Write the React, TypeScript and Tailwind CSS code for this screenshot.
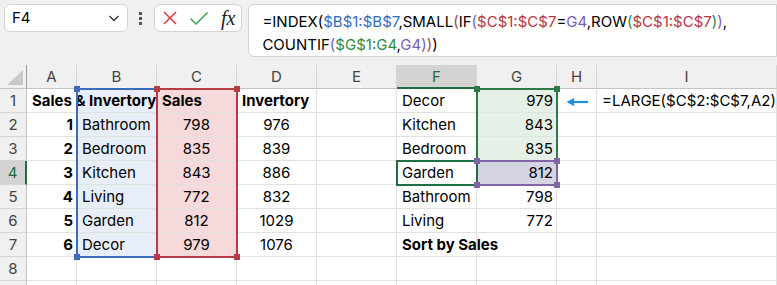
import React from "react";

const FONT = "font-['Inter','Noto_Sans',sans-serif]";

const salesRows: [string, string, string, string][] = [
  ["1", "Bathroom", "798", "976"],
  ["2", "Bedroom", "835", "839"],
  ["3", "Kitchen", "843", "886"],
  ["4", "Living", "772", "832"],
  ["5", "Garden", "812", "1029"],
  ["6", "Decor", "979", "1076"],
];

const sorted: [string, string][] = [
  ["Decor", "979"],
  ["Kitchen", "843"],
  ["Bedroom", "835"],
  ["Garden", "812"],
  ["Bathroom", "798"],
  ["Living", "772"],
];

type Spec = { text?: React.ReactNode; align?: "l" | "r" | "c"; bold?: boolean; over?: boolean };

function fillFor(r: number, c: number): string {
  if (c === 1 && r >= 1 && r <= 7) return "bg-[#e8eef8]";
  if (c === 2 && r >= 1 && r <= 7) return "bg-[#f5d9db]";
  if (c === 6 && r >= 1 && r <= 3) return "bg-[#e5f1e7]";
  if (c === 6 && r === 4) return "bg-[#d4d5e0]";
  return "bg-white";
}

function Arrow() {
  return (
    <svg width="22" height="10" viewBox="0 0 22 10">
      <line x1="3" y1="5" x2="22" y2="5" stroke="#1b8ee8" strokeWidth="2.2" />
      <path d="M0.5 5 L8 1 L8 9 Z" fill="#1b8ee8" />
    </svg>
  );
}

function specFor(r: number, c: number): Spec {
  if (r === 1) {
    if (c === 0) return { text: "Sales & Invertory", align: "l", bold: true, over: true };
    if (c === 2) return { text: "Sales", align: "l", bold: true };
    if (c === 3) return { text: "Invertory", align: "l", bold: true };
    if (c === 5) return { text: sorted[0][0], align: "l" };
    if (c === 6) return { text: sorted[0][1], align: "r" };
    if (c === 7) return { text: <Arrow />, align: "c" };
    if (c === 8) return { text: "=LARGE($C$2:$C$7,A2)", align: "l" };
    return {};
  }
  if (r >= 2 && r <= 7) {
    const d = salesRows[r - 2];
    if (c === 0) return { text: d[0], align: "r", bold: true };
    if (c === 1) return { text: d[1], align: "l" };
    if (c === 2) return { text: d[2], align: "c" };
    if (c === 3) return { text: d[3], align: "c" };
    if (c === 5 && r <= 6) return { text: sorted[r - 1][0], align: "l" };
    if (c === 6 && r <= 6) return { text: sorted[r - 1][1], align: "r" };
    if (c === 5 && r === 7) return { text: "Sort by Sales", align: "l", bold: true, over: true };
  }
  return {};
}

function alignCls(a?: "l" | "r" | "c") {
  if (a === "r") return "justify-end pr-[3px]";
  if (a === "c") return "justify-center";
  return "justify-start pl-[5px]";
}

const COLS = ["A", "B", "C", "D", "E", "F", "G", "H", "I"];

function Handle({ cls, color }: { cls: string; color: string }) {
  return <div className={`absolute w-[6px] h-[6px] ${cls} ${color}`} />;
}

export default function App() {
  const cells: React.ReactNode[] = [];
  cells.push(
    <div key="corner" className="relative bg-[#f0f0f0] border-r border-r-[#9f9f9f] border-b border-b-[#c4c4c4]">
      <svg className="absolute left-[7px] top-[5px]" width="16" height="15" viewBox="0 0 16 15">
        <path d="M16 0 L16 15 L0 15 Z" fill="#c9c9c9" />
      </svg>
    </div>
  );
  COLS.forEach((h, i) => {
    const active = i === 5;
    cells.push(
      <div
        key={"h" + h}
        className={
          active
            ? "flex items-center justify-center pt-[2px] bg-[#d3d3d3] text-[#1e6b3c] text-[15px] border-r border-r-[#d6d6d6] border-b-2 border-b-[#1f6e43]"
            : "flex items-center justify-center pt-[1px] bg-[#f0f0f0] text-[#444] text-[15px] border-r border-r-[#d6d6d6] border-b border-b-[#c4c4c4]"
        }
      >
        {h}
      </div>
    );
  });
  for (let r = 1; r <= 9; r++) {
    const active = r === 4;
    cells.push(
      <div
        key={"r" + r}
        className={
          active
            ? "flex items-center justify-center pt-[2px] bg-[#d3d3d3] text-[#1e6b3c] text-[15px] border-b border-b-[#d6d6d6] border-r-2 border-r-[#1f6e43]"
            : "flex items-center justify-center pt-[2px] bg-[#f0f0f0] text-[#444] text-[15px] border-b border-b-[#d6d6d6] border-r border-r-[#c4c4c4]"
        }
      >
        {r <= 8 ? r : ""}
      </div>
    );
    for (let c = 0; c < 9; c++) {
      const s = specFor(r, c);
      cells.push(
        <div
          key={`c${r}-${c}`}
          className={`flex items-center pt-[2px] whitespace-nowrap text-[15px] text-black border-r border-b border-[#e1e1e1] ${fillFor(r, c)} ${alignCls(s.align)} ${s.bold ? "font-bold" : ""} ${s.over ? "relative z-10 overflow-visible" : "overflow-hidden"}`}
        >
          {s.text}
        </div>
      );
    }
  }

  return (
    <div className={`w-[777px] h-[285px] overflow-hidden bg-[#f0f0f0] ${FONT}`}>
      <div className="flex h-[65px] items-start pt-[4px] pl-[4px]">
        <div className="flex h-[28px] w-[126px] items-center justify-between rounded-md border border-[#d3d3d3] bg-white pl-[7px] pr-[6px] text-[15px] text-black">
          <span>F4</span>
          <svg width="14" height="14" viewBox="0 0 14 14">
            <path d="M2.5 5 L7 9.5 L11.5 5" fill="none" stroke="#333" strokeWidth="1.3" />
          </svg>
        </div>
        <div className="flex h-[28px] w-[27px] flex-col items-center justify-center gap-[2px]">
          <div className="h-[3px] w-[3px] bg-[#555]" />
          <div className="h-[3px] w-[3px] bg-[#555]" />
          <div className="h-[3px] w-[3px] bg-[#555]" />
        </div>
        <div className="flex h-[28px] w-[90px] items-center justify-between rounded-md border border-[#d3d3d3] bg-white pl-[7px] pr-[6px]">
          <svg width="16" height="16" viewBox="0 0 16 16">
            <path d="M2 2 L14 14 M14 2 L2 14" stroke="#e0393e" strokeWidth="1.5" fill="none" />
          </svg>
          <svg width="20" height="16" viewBox="0 0 20 16">
            <path d="M1.5 8.5 L7 14 L18.5 2.5" stroke="#3ea34d" strokeWidth="1.5" fill="none" />
          </svg>
          <span className="font-['Liberation_Serif',serif] italic text-[20px] leading-none text-[#222]">fx</span>
        </div>
        <div className="ml-[6px] h-[53px] w-[540px] rounded-l-md border border-[#d3d3d3] bg-white pl-[13px] pt-[5px] text-[15px] leading-[23px] text-black whitespace-nowrap">
          <div>
            =INDEX(<span className="text-[#2f6cc0]">$B$1:$B$7</span>,SMALL
            <span className="text-[#a8454b]">(</span>IF<span className="text-[#7a5bb0]">(</span>
            <span className="text-[#b8363f]">$C$1:$C$7</span>=<span className="text-[#7a5bb0]">G4</span>,ROW
            <span className="text-[#2f8a3e]">(</span>
            <span className="text-[#b8363f]">$C$1:$C$7</span>
            <span className="text-[#2f8a3e]">)</span>
            <span className="text-[#7a5bb0]">)</span>,
          </div>
          <div>
            COUNTIF<span className="text-[#7a5bb0]">(</span>
            <span className="text-[#2f8a3e]">$G$1:G4</span>,<span className="text-[#7a5bb0]">G4</span>
            <span className="text-[#7a5bb0]">)</span>
            <span className="text-[#a8454b]">)</span>)
          </div>
        </div>
      </div>

      <div className="relative grid grid-cols-[27px_50px_80px_80px_80px_80px_80px_80px_40px_180px] grid-rows-[24px_repeat(9,24px)]">
        {cells}
        <div className="absolute z-20 left-[76px] top-[23px] w-[82px] h-[170px] border-2 border-[#3c6cbc]" />
        <div className="absolute z-20 left-[156px] top-[23px] w-[82px] h-[170px] border-2 border-[#b83c45]" />
        <div className="absolute z-20 left-[476px] top-[23px] w-[82px] h-[98px] border-2 border-[#2c7a45]" />
        <div className="absolute z-20 left-[476px] top-[95px] w-[82px] h-[26px] border-2 border-[#8064a8]" />
        <div className="absolute z-20 left-[396px] top-[95px] w-[82px] h-[26px] border-2 border-[#1f6e43]" />
        <Handle cls="z-30 left-[74px] top-[21px]" color="bg-[#3c6cbc]" />
        <Handle cls="z-30 left-[74px] top-[189px]" color="bg-[#3c6cbc]" />
        <Handle cls="z-30 left-[154px] top-[21px]" color="bg-[#b83c45]" />
        <Handle cls="z-30 left-[234px] top-[21px]" color="bg-[#b83c45]" />
        <Handle cls="z-30 left-[154px] top-[189px]" color="bg-[#b83c45]" />
        <Handle cls="z-30 left-[234px] top-[189px]" color="bg-[#b83c45]" />
        <Handle cls="z-30 left-[474px] top-[21px]" color="bg-[#2c7a45]" />
        <Handle cls="z-30 left-[554px] top-[21px]" color="bg-[#2c7a45]" />
        <Handle cls="z-30 left-[474px] top-[93px]" color="bg-[#8064a8]" />
        <Handle cls="z-30 left-[554px] top-[93px]" color="bg-[#8064a8]" />
        <Handle cls="z-30 left-[474px] top-[117px]" color="bg-[#8064a8]" />
        <Handle cls="z-30 left-[554px] top-[117px]" color="bg-[#8064a8]" />
      </div>
    </div>
  );
}
